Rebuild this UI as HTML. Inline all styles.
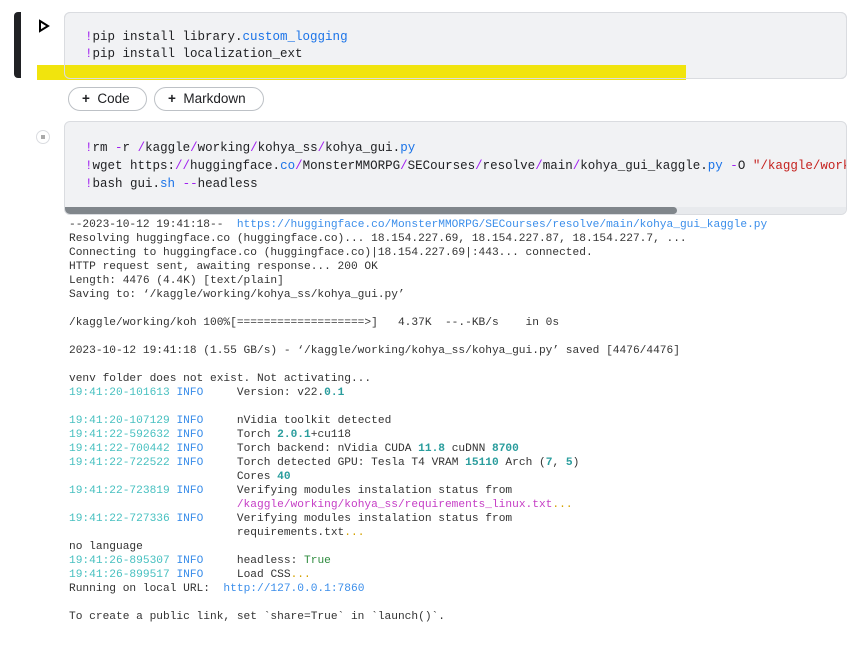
<!DOCTYPE html>
<html><head><style>
body{margin:0;width:868px;height:646px;background:#fff;position:relative;overflow:hidden;font-family:"Liberation Sans",sans-serif}
.abs{position:absolute}
.cell{position:absolute;left:64px;width:783px;background:#f1f2f4;border:1px solid #dadce0;border-radius:6px;box-sizing:border-box}
.code{position:absolute;left:20px;font-family:"Liberation Mono",monospace;font-size:12.5px;color:#202124;white-space:pre}
.p{color:#a020f0}.b{color:#1a73e8}.r{color:#c5221f}
.btn{position:absolute;top:87px;height:24px;border:1px solid #bdc1c6;border-radius:12px;box-sizing:border-box;font-size:13.5px;color:#202124;line-height:22px;padding-left:13px;background:#fff}
.out{position:absolute;left:69px;top:218px;font-family:"Liberation Mono",monospace;font-size:11.2px;line-height:14px;color:#333;white-space:pre}
.t{color:#47c0c0}.i{color:#3b8eea}.n{color:#2a9d9d;font-weight:bold}.m{color:#c53dc5}.y{color:#d4a200}.u{color:#3b8eea}.g{color:#2e8b3e}
</style></head><body>
<div class="abs" style="left:14px;top:12px;width:7px;height:66px;background:#202124;border-radius:4px 0 0 4px"></div>
<svg class="abs" style="left:38px;top:19px" width="12" height="14"><path d="M2 2 L10 7 L2 12 Z" fill="none" stroke="#000" stroke-width="2"/></svg>
<div class="cell" style="top:12px;height:67px">
<div class="code" style="top:16px;line-height:17px"><span class="p">!</span>pip install library.<span class="b">custom_logging</span>
<span class="p">!</span>pip install localization_ext</div>
</div>
<div class="abs" style="left:37px;top:65px;width:649px;height:15px;background:#f0e300;opacity:.95"></div>
<div class="cell" style="top:12px;height:67px;background:transparent"></div>
<div class="btn" style="left:68px;width:79px"><b>+</b>&nbsp; Code</div>
<div class="btn" style="left:154px;width:110px"><b>+</b>&nbsp; Markdown</div>
<div class="abs" style="left:36px;top:130px;width:14px;height:14px;border-radius:50%;border:1px solid #dadce0;box-sizing:border-box;background:#fff"><div style="position:absolute;left:4px;top:4px;width:4px;height:4px;background:#aaa"></div></div>
<div class="cell" style="top:121px;height:94px;overflow:hidden">
<div class="code" style="top:17px;line-height:18px"><span class="p">!</span>rm <span class="p">-</span>r <span class="p">/</span>kaggle<span class="p">/</span>working<span class="p">/</span>kohya_ss<span class="p">/</span>kohya_gui.<span class="b">py</span>
<span class="p">!</span>wget https:<span class="p">//</span>huggingface.<span class="b">co</span><span class="p">/</span>MonsterMMORPG<span class="p">/</span>SECourses<span class="p">/</span>resolve<span class="p">/</span>main<span class="p">/</span>kohya_gui_kaggle.<span class="b">py</span> <span class="p">-</span>O <span class="r">"/kaggle/working</span>
<span class="p">!</span>bash gui.<span class="b">sh</span> <span class="p">--</span>headless</div>
<div class="abs" style="left:0;top:85px;width:783px;height:8px;background:#e8eaed"></div>
<div class="abs" style="left:0;top:85px;width:612px;height:7px;background:#80868b;border-radius:0 4px 4px 4px"></div>
</div>
<div class="out">--2023-10-12 19:41:18--  <span class="u">https://huggingface.co/MonsterMMORPG/SECourses/resolve/main/kohya_gui_kaggle.py</span>
Resolving huggingface.co (huggingface.co)... 18.154.227.69, 18.154.227.87, 18.154.227.7, ...
Connecting to huggingface.co (huggingface.co)|18.154.227.69|:443... connected.
HTTP request sent, awaiting response... 200 OK
Length: 4476 (4.4K) [text/plain]
Saving to: ‘/kaggle/working/kohya_ss/kohya_gui.py’

/kaggle/working/koh 100%[===================>]   4.37K  --.-KB/s    in 0s      

2023-10-12 19:41:18 (1.55 GB/s) - ‘/kaggle/working/kohya_ss/kohya_gui.py’ saved [4476/4476]

venv folder does not exist. Not activating...
<span class="t">19:41:20-101613</span> <span class="i">INFO    </span> Version: v22.<span class="n">0.1</span>

<span class="t">19:41:20-107129</span> <span class="i">INFO    </span> nVidia toolkit detected
<span class="t">19:41:22-592632</span> <span class="i">INFO    </span> Torch <span class="n">2.0.1</span>+cu118
<span class="t">19:41:22-700442</span> <span class="i">INFO    </span> Torch backend: nVidia CUDA <span class="n">11.8</span> cuDNN <span class="n">8700</span>
<span class="t">19:41:22-722522</span> <span class="i">INFO    </span> Torch detected GPU: Tesla T4 VRAM <span class="n">15110</span> Arch (<span class="n">7</span>, <span class="n">5</span>)
                         Cores <span class="n">40</span>
<span class="t">19:41:22-723819</span> <span class="i">INFO    </span> Verifying modules instalation status from
                         <span class="m">/kaggle/working/kohya_ss/requirements_linux.txt</span><span class="y">...</span>
<span class="t">19:41:22-727336</span> <span class="i">INFO    </span> Verifying modules instalation status from
                         requirements.txt<span class="y">...</span>
no language
<span class="t">19:41:26-895307</span> <span class="i">INFO    </span> headless: <span class="g">True</span>
<span class="t">19:41:26-899517</span> <span class="i">INFO    </span> Load CSS<span class="y">...</span>
Running on local URL:  <span class="u">http://127.0.0.1:7860</span>

To create a public link, set `share=True` in `launch()`.</div>
</body></html>
